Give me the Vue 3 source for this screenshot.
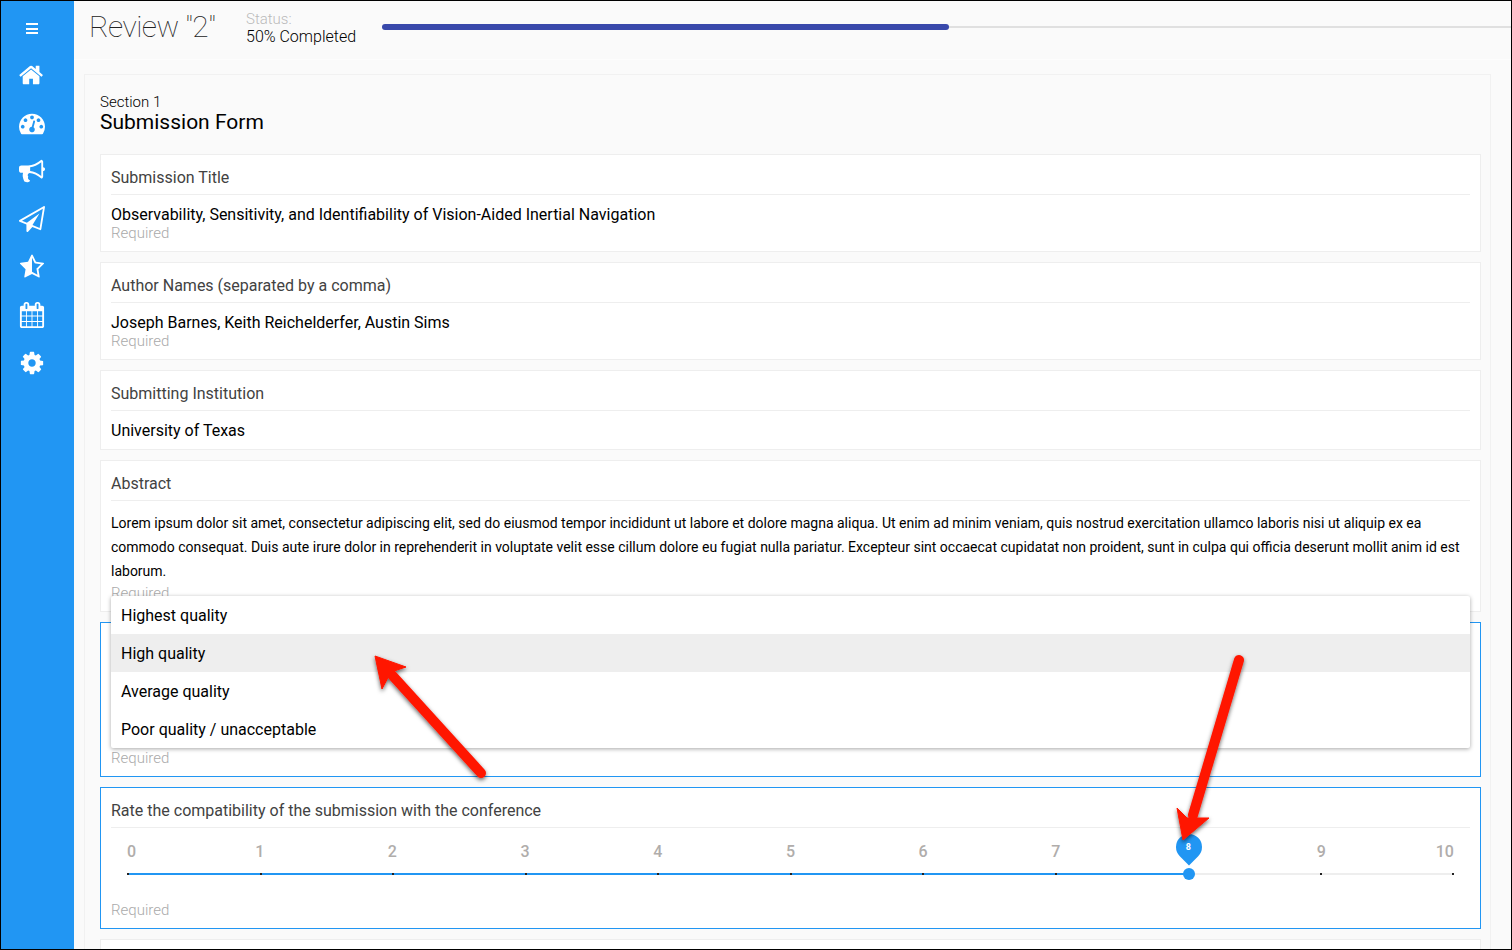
<script setup>
const icons = [
  'M1408 992v480q0 26-19 45t-45 19h-384v-384h-256v384h-384q-26 0-45-19t-19-45v-480q0-1 .5-3t.5-3l575-474 575 474q1 2 1 6zm223-69l-62 74q-8 9-21 11h-3q-13 0-21-7l-692-577-692 577q-12 8-24 7-13-2-21-11l-62-74q-8-10-7-23.5t11-21.5l719-599q32-26 76-26t76 26l244 204v-195q0-14 9-23t23-9h192q14 0 23 9t9 23v408l219 182q10 8 11 21.5t-7 23.5z',
  'M384 1152q0-53-37.5-90.5t-90.5-37.5-90.5 37.5-37.5 90.5 37.5 90.5 90.5 37.5 90.5-37.5 37.5-90.5zm192-448q0-53-37.5-90.5t-90.5-37.5-90.5 37.5-37.5 90.5 37.5 90.5 90.5 37.5 90.5-37.5 37.5-90.5zm428 481l101-382q6-26-7.5-48.5t-38.5-29.5-48 6.5-30 39.5l-101 382q-60 5-107 43.5t-63 98.5q-20 77 20 146t117 89 146-20 89-117q16-60-6-117t-72-91zm660-33q0-53-37.5-90.5t-90.5-37.5-90.5 37.5-37.5 90.5 37.5 90.5 90.5 37.5 90.5-37.5 37.5-90.5zm-640-640q0-53-37.5-90.5t-90.5-37.5-90.5 37.5-37.5 90.5 37.5 90.5 90.5 37.5 90.5-37.5 37.5-90.5zm448 192q0-53-37.5-90.5t-90.5-37.5-90.5 37.5-37.5 90.5 37.5 90.5 90.5 37.5 90.5-37.5 37.5-90.5zm320 448q0 261-141 483-19 29-54 29h-1402q-35 0-54-29-141-221-141-483 0-182 71-348t191-286 286-191 348-71 348 71 286 191 191 286 71 348z',
  'M1664 640q53 0 90.5 37.5t37.5 90.5-37.5 90.5-90.5 37.5v384q0 52-38 90t-90 38q-417-347-812-380-58 19-91 66t-31 100.5 40 92.5q-20 33-23 65.5t6 58 33.5 55 48 50 61.5 50.5q-29 58-111.5 83t-168.5 11.5-132-55.5q-7-23-29.5-87.5t-32-94.5-23-89-15-101 3.5-98.5 22-110.5h-122q-66 0-113-47t-47-113v-192q0-66 47-113t113-47h480q435 0 896-384 52 0 90 38t38 90v384zm-128 604v-954q-394 302-768 343v270q377 42 768 341z',
  'M1764 11q33 24 27 64l-256 1536q-5 29-32 45-14 8-31 8-11 0-24-5l-527-215-298 327q-18 21-47 21-14 0-23-4-19-7-30-23.5t-11-36.5v-452l-472-193q-37-14-40-55-3-39 32-59l1664-960q35-21 68 2zm-342 1499l221-1323-1434 827 336 137 863-639-478 797z',
  'M1250 957l257-250-356-52-66-10-30-60-159-322v963l59 31 318 168-60-355-12-66zm452-262l-363 354 86 500q5 33-6 51.5t-34 18.5q-17 0-40-12l-449-236-449 236q-23 12-40 12-23 0-34-18.5t-6-51.5l86-500-364-354q-32-32-23-59.5t54-34.5l502-73 225-455q20-41 49-41 28 0 49 41l225 455 502 73q45 7 54 34.5t-24 59.5z',
  'M192 1664h288v-288h-288v288zm352 0h320v-288h-320v288zm-352-352h288v-320h-288v320zm352 0h320v-320h-320v320zm-352-384h288v-288h-288v288zm736 736h320v-288h-320v288zm-384-736h320v-288h-320v288zm768 736h288v-288h-288v288zm-384-352h320v-320h-320v320zm-352-864v-288q0-13-9.5-22.5t-22.5-9.5h-64q-13 0-22.5 9.5t-9.5 22.5v288q0 13 9.5 22.5t22.5 9.5h64q13 0 22.5-9.5t9.5-22.5zm736 864h288v-320h-288v320zm-384-384h320v-288h-320v288zm384 0h288v-288h-288v288zm32-480v-288q0-13-9.5-22.5t-22.5-9.5h-64q-13 0-22.5 9.5t-9.5 22.5v288q0 13 9.5 22.5t22.5 9.5h64q13 0 22.5-9.5t9.5-22.5zm384-64v1280q0 52-38 90t-90 38h-1408q-52 0-90-38t-38-90v-1280q0-52 38-90t90-38h128v-96q0-66 47-113t113-47h64q66 0 113 47t47 113v96h384v-96q0-66 47-113t113-47h64q66 0 113 47t47 113v96h128q52 0 90 38t38 90z',
  'M1152 896q0-106-75-181t-181-75-181 75-75 181 75 181 181 75 181-75 75-181zm512-109v222q0 12-8 23t-20 13l-185 28q-19 54-39 91 35 50 107 138 10 12 10 25t-9 23q-27 37-99 108t-94 71q-12 0-26-9l-138-108q-44 23-91 38-16 136-29 186-7 28-36 28h-222q-14 0-24.5-8.5t-11.5-21.5l-28-184q-49-16-90-37l-141 107q-10 9-25 9-14 0-25-11-126-114-165-168-7-10-7-23 0-12 8-23 15-21 51-66.5t54-70.5q-27-50-41-99l-183-27q-13-2-21-12.5t-8-23.5v-222q0-12 8-23t19-13l186-28q14-46 39-92-40-57-107-138-10-12-10-24 0-10 9-23 26-36 98.5-107.5t94.5-71.5q13 0 26 10l138 107q44-23 91-38 16-136 29-186 7-28 36-28h222q14 0 24.5 8.5t11.5 21.5l28 184q49 16 90 37l142-107q9-9 24-9 13 0 25 10 129 119 165 170 7 8 7 22 0 12-8 23-15 21-51 66.5t-54 70.5q26 50 41 98l183 28q13 2 21 12.5t8 23.5z'
]

const options = ['Highest quality', 'High quality', 'Average quality', 'Poor quality / unacceptable']
const scale = [0, 1, 2, 3, 4, 5, 6, 7, 8, 9, 10]
const rating = 8
</script>

<template>
  <div class="page">
    <aside class="sidebar">
      <div class="bars"><span></span><span></span><span></span></div>
      <svg v-for="(d, i) in icons" :key="i" class="nav-icon" viewBox="0 0 1792 1792"><path :d="d" /></svg>
    </aside>

    <main class="main">
      <header class="topbar">
        <h1>Review "2"</h1>
        <div class="status">
          <div class="status-label">Status:</div>
          <div class="status-value">50% Completed</div>
        </div>
        <div class="progress"><div class="progress-fill"></div></div>
      </header>

      <section class="section">
        <div class="section-no">Section 1</div>
        <h2>Submission Form</h2>

        <div class="card card-1">
          <div class="card-title">Submission Title</div>
          <div class="value">Observability, Sensitivity, and Identifiability of Vision-Aided Inertial Navigation</div>
          <div class="required">Required</div>
        </div>

        <div class="card card-1">
          <div class="card-title">Author Names (separated by a comma)</div>
          <div class="value">Joseph Barnes, Keith Reichelderfer, Austin Sims</div>
          <div class="required">Required</div>
        </div>

        <div class="card card-3">
          <div class="card-title">Submitting Institution</div>
          <div class="value">University of Texas</div>
        </div>

        <div class="card card-4">
          <div class="card-title">Abstract</div>
          <div class="abstract">Lorem ipsum dolor sit amet, consectetur adipiscing elit, sed do eiusmod tempor incididunt ut labore et dolore magna aliqua. Ut enim ad minim veniam, quis nostrud exercitation ullamco laboris nisi ut aliquip ex ea commodo consequat. Duis aute irure dolor in reprehenderit in voluptate velit esse cillum dolore eu fugiat nulla pariatur. Excepteur sint occaecat cupidatat non proident, sunt in culpa qui officia deserunt mollit anim id est laborum.</div>
          <div class="required">Required</div>
        </div>

        <div class="card card-5 active">
          <ul class="menu">
            <li v-for="(o, i) in options" :key="o" :class="{ hover: i === 1 }">{{ o }}</li>
          </ul>
          <div class="required">Required</div>
        </div>

        <div class="card card-6 active">
          <div class="card-title">Rate the compatibility of the submission with the conference</div>
          <div class="slider">
            <div class="labels">
              <span v-for="n in scale" :key="n" class="label">
                <template v-if="n !== rating">{{ n }}</template>
              </span>
            </div>
            <div class="track">
              <div class="track-fill" :style="{ width: (rating / 10) * 100 + '%' }"></div>
              <div class="ticks"><i v-for="n in scale" :key="n"></i></div>
              <div class="thumb" :style="{ left: (rating / 10) * 100 + '%' }"></div>
              <div class="pin" :style="{ left: (rating / 10) * 100 + '%' }"><span>{{ rating }}</span></div>
            </div>
          </div>
          <div class="required">Required</div>
        </div>

        <div class="card card-7"></div>
      </section>
    </main>

    <svg class="arrows" viewBox="0 0 1512 950">
      <defs>
        <filter id="arrow-shadow" x="-20%" y="-20%" width="140%" height="140%">
          <feDropShadow dx="0" dy="2" stdDeviation="2" flood-color="#000" flood-opacity="0.6" />
        </filter>
      </defs>
      <g filter="url(#arrow-shadow)" fill="#ff1500" stroke="#ff1500">
        <path d="M481 773 L392 675" stroke-width="10" stroke-linecap="round" fill="none" />
        <path d="M375 656 L406 667 L391 672 L382 689 Z" stroke-width="1" />
        <path d="M1239 660 L1193 815" stroke-width="10" stroke-linecap="round" fill="none" />
        <path d="M1183 840 L1177 808 L1187 818 L1209 818 Z" stroke-width="1" />
      </g>
    </svg>
  </div>
</template>

<style>
html, body {
  margin: 0;
  height: 100%;
  overflow: hidden;
}
</style>

<style scoped>
.page {
  position: relative;
  display: flex;
  width: 1512px;
  height: 950px;
  box-sizing: border-box;
  border: 1px solid #000;
  overflow: hidden;
  background: #fafafa;
  font-family: Roboto, "Liberation Sans", sans-serif;
  color: #000;
}

.sidebar {
  flex: none;
  width: 73px;
  background: #2196f3;
  display: flex;
  flex-direction: column;
  align-items: center;
  padding: 22px 12px 0 0;
  box-sizing: border-box;
}

.bars {
  width: 12px;
  height: 11px;
  margin-bottom: 28px;
  display: flex;
  flex-direction: column;
  justify-content: space-between;
}

.bars span {
  height: 2px;
  background: #fff;
}

.nav-icon {
  width: 26px;
  height: 26px;
  margin-bottom: 22px;
  fill: #fff;
}

.main {
  flex: 1;
  min-width: 0;
}

.topbar {
  display: flex;
  align-items: center;
  height: 59px;
  box-sizing: border-box;
  border-bottom: 1px solid #fdfdfd;
  padding-left: 15px;
}

.topbar h1 {
  margin: 0 0 6px;
  width: 157px;
  flex: none;
  font-size: 30px;
  letter-spacing: -0.55px;
  font-weight: 100;
  color: #222;
  line-height: 52px;
}

.status {
  width: 136px;
  flex: none;
  margin-bottom: 5px;
  font-size: 16px;
  line-height: 17px;
}

.status-label {
  color: #bbb;
  font-size: 15px;
  font-weight: 300;
}

.status-value {
  font-weight: 300;
}

.progress {
  flex: 1;
  height: 2px;
  background: #e0e0e0;
  position: relative;
  top: -3px;
}

.progress-fill {
  position: absolute;
  left: 0;
  top: -2px;
  width: 567px;
  height: 6px;
  border-radius: 3px;
  background: #3949ab;
}

.section {
  margin: 14px 20px 0 10px;
  padding: 19px 9px 0 15px;
  border: 1px solid #f1f1f1;
  background: #fafafa;
}

.section-no {
  font-size: 15px;
  line-height: 16px;
  font-weight: 300;
}

h2 {
  margin: 0 0 19px;
  font-size: 21px;
  line-height: 25px;
  font-weight: 400;
}

.card {
  position: relative;
  background: #fff;
  border: 1px solid #eee;
  padding: 0 10px;
  margin-bottom: 10px;
  box-sizing: border-box;
}

.active {
  border-color: #2196f3;
}

.card-1 { height: 98px; }
.card-3 { height: 80px; }
.card-4 { height: 152px; }
.card-5 { height: 155px; padding-top: 127px; }
.card-6 { height: 142px; }
.card-7 { height: 60px; }

.card-title {
  height: 39px;
  line-height: 46px;
  font-size: 16px;
  color: #424242;
  border-bottom: 1px solid #eee;
}

.value {
  font-size: 16px;
  line-height: 20px;
  margin-top: 10px;
}

.required {
  font-size: 15px;
  line-height: 16px;
  font-weight: 300;
  color: #aaa;
}

.abstract {
  font-size: 14px;
  line-height: 24px;
  margin: 10px 0 2px;
}

.menu {
  position: absolute;
  z-index: 2;
  left: 10px;
  right: 10px;
  top: -27px;
  margin: 0;
  padding: 0;
  list-style: none;
  background: #fff;
  border-radius: 2px;
  box-shadow: 0 1px 4px rgba(0, 0, 0, 0.35);
}

.menu li {
  height: 38px;
  line-height: 40px;
  padding-left: 10px;
  font-size: 16px;
}

.menu li.hover {
  background: #eee;
}

.slider {
  padding: 14px 17px 0;
  height: 74px;
  box-sizing: border-box;
}

.labels {
  display: flex;
  justify-content: space-between;
  height: 20px;
  line-height: 20px;
  font-size: 16px;
  font-weight: 500;
  color: #b0adab;
}

.label {
  width: 0;
  display: flex;
  justify-content: center;
  white-space: nowrap;
}

.label:first-child {
  justify-content: flex-start;
  margin-left: -1px;
}

.label:last-child {
  justify-content: flex-end;
  margin-right: -1px;
}

.track {
  position: relative;
  height: 2px;
  margin-top: 11px;
  background: #eee;
}

.track-fill {
  position: absolute;
  left: 0;
  top: 0;
  height: 2px;
  background: #2196f3;
}

.ticks {
  position: absolute;
  left: -1px;
  right: -1px;
  top: 0;
  display: flex;
  justify-content: space-between;
}

.ticks i {
  width: 2px;
  height: 2px;
  background: #222;
}

.thumb {
  position: absolute;
  top: -5px;
  width: 12px;
  height: 12px;
  margin-left: -5px;
  border-radius: 50%;
  background: #2196f3;
}

.pin {
  position: absolute;
  top: -39px;
  width: 26px;
  height: 26px;
  margin-left: -12px;
  border-radius: 50% 50% 0 50%;
  background: #2196f3;
  transform: rotate(45deg);
  display: flex;
  align-items: center;
  justify-content: center;
}

.pin span {
  transform: rotate(-45deg);
  color: #fff;
  font-size: 9px;
  font-weight: 700;
  line-height: 9px;
}

.arrows {
  position: absolute;
  left: -1px;
  top: -1px;
  width: 1512px;
  height: 950px;
  z-index: 5;
  pointer-events: none;
}
</style>
